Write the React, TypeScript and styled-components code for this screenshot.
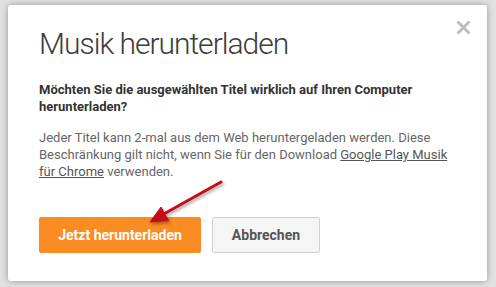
import React from "react";
import styled, { createGlobalStyle } from "styled-components";

const GlobalStyle = createGlobalStyle`
  html, body {
    margin: 0;
    padding: 0;
    background: #e2e2e2;
    font-family: Roboto, "Liberation Sans", Arial, sans-serif;
  }
`;

const App = () => {
  return (
    <>
      <GlobalStyle />
      <Page>
        <Dialog>
          <CloseButton aria-label="Schließen">
            <svg width="15" height="15" viewBox="0 0 15 15">
              <path d="M1.5 1.5 L13.5 13.5 M13.5 1.5 L1.5 13.5" stroke="#bdbdbd" strokeWidth="3" />
            </svg>
          </CloseButton>
          <Title>Musik herunterladen</Title>
          <Question>
            Möchten Sie die ausgewählten Titel wirklich auf Ihren Computer herunterladen?
          </Question>
          <Text>
            Jeder Titel kann 2-mal aus dem Web heruntergeladen werden. Diese Beschränkung gilt
            nicht, wenn Sie für den Download <a href="#">Google Play Musik</a>{" "}
            <a href="#">für Chrome</a> verwenden.
          </Text>
          <Actions>
            <Button $primary>Jetzt herunterladen</Button>
            <Button>Abbrechen</Button>
          </Actions>
        </Dialog>
        <Arrow width="496" height="287" viewBox="0 0 496 287">
          <defs>
            <filter id="sh" x="-20%" y="-20%" width="140%" height="140%">
              <feDropShadow dx="1.5" dy="2" stdDeviation="1.5" floodColor="#000" floodOpacity="0.35" />
            </filter>
          </defs>
          <g filter="url(#sh)" fill="#c40f18" stroke="#c40f18">
            <line x1="221" y1="182" x2="162" y2="215" strokeWidth="3" strokeLinecap="round" />
            <polygon points="150,222 168.5,220.5 161,207" strokeWidth="1" strokeLinejoin="round" />
          </g>
        </Arrow>
      </Page>
    </>
  );
};

export default App;

const Page = styled.div`
  position: relative;
  width: 496px;
  height: 287px;
  padding: 5px 9px 6px 8px;
  box-sizing: border-box;
  overflow: hidden;
`;

const Dialog = styled.div`
  position: relative;
  box-sizing: border-box;
  width: 479px;
  height: 276px;
  padding: 21px 20px 0 31px;
  background: #ffffff;
  border-radius: 3px;
  box-shadow: 0 0 7px rgba(0, 0, 0, 0.35);
`;

const CloseButton = styled.button`
  position: absolute;
  top: 15px;
  right: 16px;
  padding: 0;
  border: 0;
  background: none;
  cursor: pointer;
  line-height: 0;
`;

const Title = styled.h1`
  margin: 0;
  font-size: 30px;
  line-height: 36px;
  font-weight: 300;
  letter-spacing: -1px;
  color: #3c3c3c;
`;

const Question = styled.p`
  margin: 19px 0 0;
  font-size: 13px;
  line-height: 17px;
  font-weight: 700;
  color: #333333;
  padding-right: 30px;
`;

const Text = styled.p`
  margin: 14px 0 0;
  padding-right: 14px;
  font-size: 13px;
  line-height: 17px;
  color: #666666;

  & a {
    color: #555555;
    text-decoration: underline;
  }
`;

const Actions = styled.div`
  display: flex;
  gap: 11px;
  margin-top: 37px;
`;

const Button = styled.button<{ $primary?: boolean }>`
  box-sizing: border-box;
  width: ${(p) => (p.$primary ? "162px" : "108px")};
  height: 36px;
  padding: 0;
  border-radius: 2px;
  font-family: Roboto, "Liberation Sans", Arial, sans-serif;
  font-size: 14px;
  font-weight: 700;
  cursor: pointer;
  border: 1px solid ${(p) => (p.$primary ? "#fb8c24" : "#d2d2d2")};
  background: ${(p) => (p.$primary ? "#fb8c24" : "#f5f5f5")};
  color: ${(p) => (p.$primary ? "#ffffff" : "#555555")};
`;

const Arrow = styled.svg`
  position: absolute;
  left: 0;
  top: 0;
  pointer-events: none;
`;
